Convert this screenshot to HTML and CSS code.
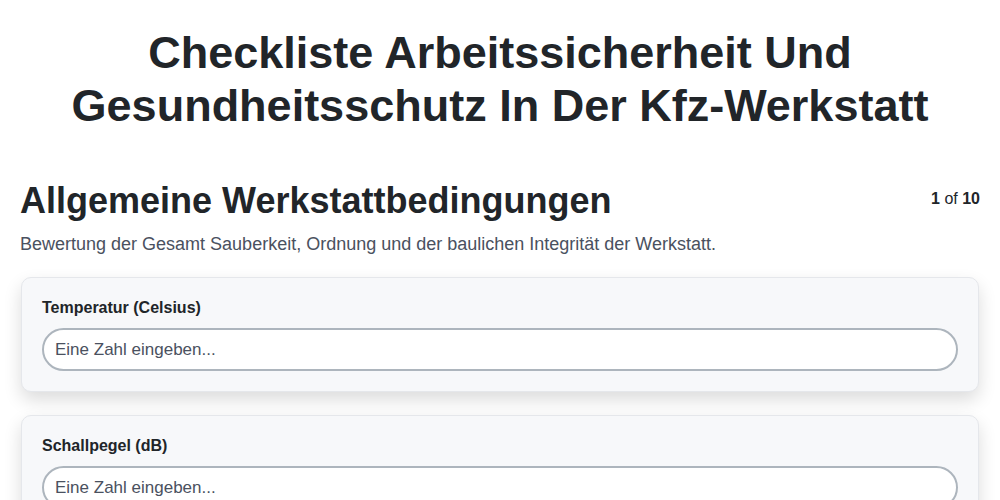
FILE: index.html
```html
<!DOCTYPE html>
<html lang="de">
<head>
    <meta charset="utf-8">
    <title>Checkliste Arbeitssicherheit Und Gesundheitsschutz In Der Kfz-Werkstatt</title>
    <link rel="stylesheet" href="styles.css">
</head>
<body>
    <h1 class="page-title">Checkliste Arbeitssicherheit Und Gesundheitsschutz In Der Kfz-Werkstatt</h1>

    <section class="section">
        <div class="section-head">
            <h2 class="section-title">Allgemeine Werkstattbedingungen</h2>
            <div class="step"><b>1</b> of <b>10</b></div>
        </div>
        <p class="section-desc">Bewertung der Gesamt Sauberkeit, Ordnung und der baulichen Integrität der Werkstatt.</p>

        <div class="field-card">
            <label class="field-label" for="temp">Temperatur (Celsius)</label>
            <input class="field-input" id="temp" type="number" placeholder="Eine Zahl eingeben...">
        </div>

        <div class="field-card">
            <label class="field-label" for="noise">Schallpegel (dB)</label>
            <input class="field-input" id="noise" type="number" placeholder="Eine Zahl eingeben...">
        </div>
    </section>
</body>
</html>
```

FILE: styles.css
```css
/* Grundlayout */
body {
    font-family: "Liberation Sans", Arial, sans-serif;
    color: #212529;
    background-color: #ffffff;
    margin: 0;
    padding: 20px;
}

/* Haupttitel */
.page-title {
    font-size: 45px;
    line-height: 53px;
    font-weight: bold;
    text-align: center;
    margin: 6px 0 0;
}

/* Abschnittskopf */
.section {
    margin-top: 48px;
}
.section-head {
    display: flex;
    justify-content: space-between;
    align-items: flex-start;
}
.section-title {
    font-size: 36px;
    line-height: 42px;
    margin: 0;
}
.step {
    font-size: 16px;
    padding-top: 10px;
    color: #212529;
}
.section-desc {
    font-size: 18px;
    line-height: 22px;
    color: #4a5160;
    margin: 11px 0 22px;
}

/* Eingabekarten */
.field-card {
    background-color: #f7f8fa;
    border: 1px solid #e5e7eb;
    border-radius: 10px;
    box-shadow: 0 8px 18px rgba(0, 0, 0, 0.14);
    padding: 21px 20px 20px;
    margin: 0 1px 23px 1px;
}
.field-label {
    display: block;
    font-size: 16px;
    font-weight: bold;
    margin-bottom: 11px;
}
.field-input {
    display: block;
    width: 100%;
    box-sizing: border-box;
    height: 43px;
    padding: 0 11px;
    font-family: inherit;
    font-size: 17px;
    color: #212529;
    background: #ffffff;
    border: 2px solid #adb5bd;
    border-radius: 22px;
    outline: none;
}
.field-input::placeholder {
    color: #4a5160;
}
```
